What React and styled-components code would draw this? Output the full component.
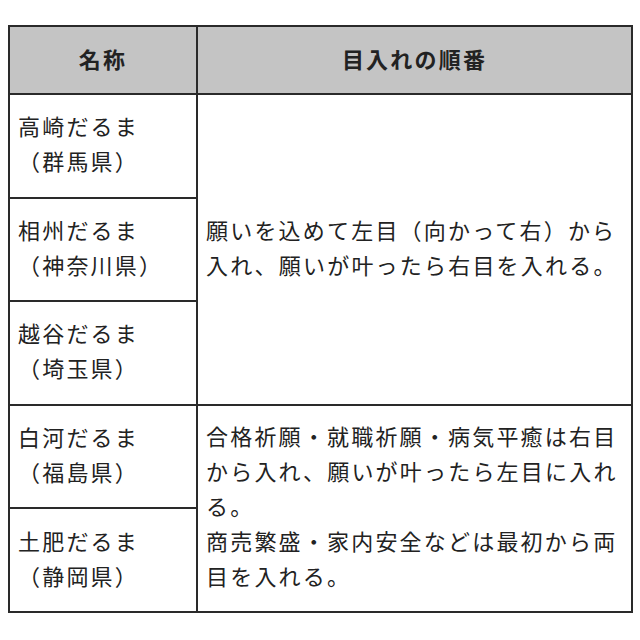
import React from "react";
import styled, { createGlobalStyle } from "styled-components";

const GlobalStyle = createGlobalStyle`
  body {
    margin: 0;
    background: #ffffff;
    font-family: "Noto Sans CJK JP", "Noto Sans", sans-serif;
    color: #222222;
  }
`;

const Page = styled.div`
  padding: 25px 7px 0 8px;
`;

const Table = styled.table`
  width: 625px;
  border-collapse: collapse;
  table-layout: fixed;
  border: 2px solid #2a2a2a;
  font-size: 22px;
  letter-spacing: 0.1em;
  line-height: 35px;
`;

const HeadCell = styled.th`
  height: 63px;
  background: #c4c4c4;
  border: 2px solid #2a2a2a;
  font-weight: 700;
  text-align: center;
  vertical-align: middle;
  padding: 0 0 3px;
  width: ${(p) => p.$width || "auto"};
`;

const Cell = styled.td`
  height: 96.6px;
  border: 2px solid #2a2a2a;
  padding: 0 6px 5px 8px;
  vertical-align: middle;
  text-align: left;
  font-weight: 400;
`;

const Name = styled.span`
  display: block;
`;

const rows = [
  { name: "高崎だるま", pref: "（群馬県）" },
  { name: "相州だるま", pref: "（神奈川県）" },
  { name: "越谷だるま", pref: "（埼玉県）" },
  { name: "白河だるま", pref: "（福島県）" },
  { name: "土肥だるま", pref: "（静岡県）" },
];

function NameCell({ row }) {
  return (
    <Cell>
      <Name>{row.name}</Name>
      <Name>{row.pref}</Name>
    </Cell>
  );
}

export default function App() {
  return (
    <Page>
      <GlobalStyle />
      <Table>
        <thead>
          <tr>
            <HeadCell $width="186px">名称</HeadCell>
            <HeadCell>目入れの順番</HeadCell>
          </tr>
        </thead>
        <tbody>
          <tr>
            <NameCell row={rows[0]} />
            <Cell rowSpan={3}>
              願いを込めて左目（向かって右）から入れ、願いが叶ったら右目を入れる。
            </Cell>
          </tr>
          <tr>
            <NameCell row={rows[1]} />
          </tr>
          <tr>
            <NameCell row={rows[2]} />
          </tr>
          <tr>
            <NameCell row={rows[3]} />
            <Cell rowSpan={2}>
              合格祈願・就職祈願・病気平癒は右目から入れ、願いが叶ったら左目に入れる。
              <br />
              商売繁盛・家内安全などは最初から両目を入れる。
            </Cell>
          </tr>
          <tr>
            <NameCell row={rows[4]} />
          </tr>
        </tbody>
      </Table>
    </Page>
  );
}
